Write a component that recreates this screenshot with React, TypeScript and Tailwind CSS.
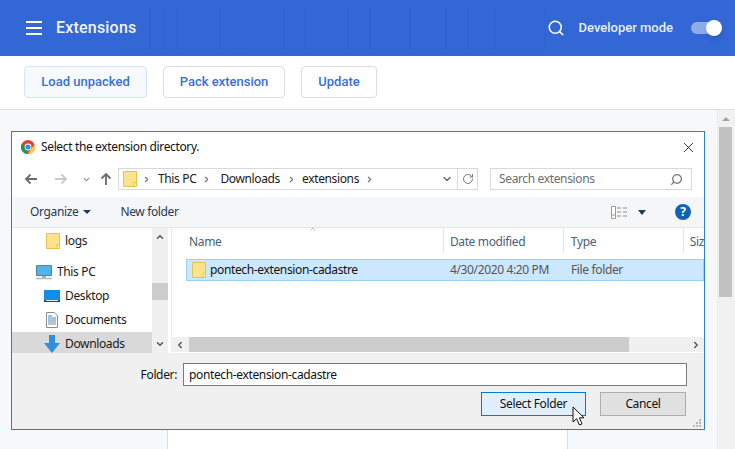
import { ChevronDown, ChevronLeft, ChevronRight, ChevronUp, RotateCw, Search, X } from "lucide-react";

const win = "font-['Noto_Sans',sans-serif] text-[12px] tracking-[-0.36px]";

function Folder({ className = "" }: { className?: string }) {
  return (
    <svg viewBox="0 0 14 16" className={`w-[14px] h-[16px] shrink-0 ${className}`}>
      <path d="M.5.5h13v15H.5z" fill="#fce48f" stroke="#e8c14f" />
      <path d="M11 11.500h2.500v4H11z" fill="#fff3c4" stroke="#e8c14f" />
    </svg>
  );
}

function ChromeLogo() {
  return (
    <svg viewBox="0 0 14 14" className="w-[14px] h-[14px] shrink-0">
      <circle cx="7" cy="7" r="7" fill="#db4437" />
      <path d="M7 14A7 7 0 0 1 1 3.400L4.500 8.500 7 14z" fill="#0f9d58" />
      <path d="M7 14l3-5 3.600-4.500A7 7 0 0 1 7 14z" fill="#ffcd40" />
      <circle cx="7" cy="7" r="3.400" fill="#fff" />
      <circle cx="7" cy="7" r="2.600" fill="#4285f4" />
    </svg>
  );
}

function TreeRow({ icon, label, indent, active }: { icon: React.ReactNode; label: string; indent: string; active?: boolean }) {
  return (
    <div className={`flex items-center h-[24px] shrink-0 ${indent} ${active ? "bg-[#d9d9d9]" : ""}`}>
      {icon}
      <span className="text-[#1a1a1a]">{label}</span>
    </div>
  );
}

function HeaderGhost() {
  const xs = [150, 165, 177, 220, 240, 284, 305, 348, 370, 410, 446, 468, 495, 545];
  return (
    <svg className="absolute left-0 top-0 w-[735px] h-[56px] pointer-events-none" viewBox="0 0 735 56">
      {xs.map((x) => (
        <path key={x} d={`M${x} 6v44`} stroke="#3064d4" strokeWidth="1" />
      ))}
      <path d="M117 53h428" stroke="#3064d4" />
    </svg>
  );
}

function Cursor() {
  return (
    <svg viewBox="0 0 14 20" className="absolute left-[572px] top-[406px] w-[14px] h-[20px]">
      <path d="M1 1v15l3.600-3.400L7.400 19l2.600-1.200-2.700-6H12z" fill="#fff" stroke="#111" strokeWidth="1" strokeLinejoin="round" />
    </svg>
  );
}

function Dialog() {
  return (
    <div className={`absolute left-[11px] top-[131px] w-[694px] h-[299px] bg-white border border-[#2a7fc9] flex flex-col ${win}`}>
      {/* title */}
      <div className="flex items-center h-[29px] shrink-0 pl-[9px] pr-[7px] pt-[1px]">
        <ChromeLogo />
        <span className="ml-[6px] text-[#111]">Select the extension directory.</span>
        <X className="ml-auto w-[17px] h-[17px] text-black" strokeWidth={1.1} />
      </div>

      {/* address bar */}
      <div className="flex items-center h-[22px] shrink-0 mt-[7px] pl-[12px]">
        <svg viewBox="0 0 14 12" className="w-[14px] h-[12px] text-[#6b6b6b]">
          <path d="M13 6H2M6.500 1.500 2 6l4.500 4.500" fill="none" stroke="currentColor" strokeWidth="1.800" />
        </svg>
        <svg viewBox="0 0 14 12" className="w-[14px] h-[12px] ml-[16px] text-[#c8c8c8]">
          <path d="M1 6h11M7.500 1.500 12 6l-4.500 4.500" fill="none" stroke="currentColor" strokeWidth="1.800" />
        </svg>
        <ChevronDown className="w-[9px] h-[9px] ml-[14px] text-[#8a8a8a]" strokeWidth={3} />
        <svg viewBox="0 0 12 14" className="w-[12px] h-[14px] ml-[9px] text-[#6b6b6b]">
          <path d="M6 13V2M1.500 6.500 6 2l4.500 4.500" fill="none" stroke="currentColor" strokeWidth="1.800" />
        </svg>
        <div className="flex items-center w-[360px] h-[22px] ml-[6px] border border-[#d9d9d9] bg-white">
          <Folder className="ml-[4px]" />
          <ChevronRight className="w-[9px] h-[9px] ml-[5px] text-[#707070]" strokeWidth={3} />
          <span className="ml-[7px] text-[#1a1a1a]">This PC</span>
          <ChevronRight className="w-[9px] h-[9px] ml-[6px] text-[#707070]" strokeWidth={3} />
          <span className="ml-[9px] text-[#1a1a1a]">Downloads</span>
          <ChevronRight className="w-[9px] h-[9px] ml-[7px] text-[#707070]" strokeWidth={3} />
          <span className="ml-[6px] text-[#1a1a1a]">extensions</span>
          <ChevronRight className="w-[9px] h-[9px] ml-[6px] text-[#707070]" strokeWidth={3} />
          <ChevronDown className="w-[12px] h-[12px] ml-auto mr-[4px] text-[#606060]" strokeWidth={2.5} />
          <div className="flex items-center justify-center w-[20px] h-full border-l border-[#d9d9d9]">
            <RotateCw className="w-[12px] h-[12px] text-[#6a6a6a]" strokeWidth={1.8} />
          </div>
        </div>
        <div className="flex items-center w-[202px] h-[22px] ml-[12px] border border-[#d9d9d9] pl-[8px] pr-[8px] bg-white">
          <span className="text-[#6d6d6d]">Search extensions</span>
          <Search className="w-[13px] h-[13px] ml-auto text-[#777] -scale-x-100" strokeWidth={2.4} />
        </div>
      </div>

      {/* command bar */}
      <div className="flex items-center h-[30px] shrink-0 mt-[7px] bg-[#f5f6f7] pl-[18px] pr-[13px] text-[#1e395b]">
        <span>Organize</span>
        <span className="ml-[5px] w-0 h-0 border-x-[4px] border-x-transparent border-t-[4px] border-t-[#1e395b]" />
        <span className="ml-[29px]">New folder</span>
        <svg viewBox="0 0 17 13" className="ml-auto w-[17px] h-[13px]">
          <path d="M.5.500h4v12h-4z" fill="#fff" stroke="#9a9a9a" />
          <path d="M1.500 8.500h2v1h-2z" fill="#d33" />
          <path d="M6 2h4M12 2h4M6 6h4M12 6h4M6 10h4M12 10h4" stroke="#8a8a8a" />
        </svg>
        <span className="ml-[10px] w-0 h-0 border-x-[4.500px] border-x-transparent border-t-[5px] border-t-[#1e395b]" />
        <span className="ml-[29px] w-[16px] h-[16px] rounded-full bg-[#0f62b8] text-white text-[12px] font-bold flex items-center justify-center tracking-normal">?</span>
      </div>

      {/* panes */}
      <div className="flex h-[126px] shrink-0 border-t border-[#e5e5e5]">
        <div className="relative w-[140px] shrink-0 flex flex-col overflow-hidden pt-[1px]">
          <TreeRow indent="pl-[34px]" label="logs" icon={<Folder className="mr-[5px]" />} />
          <div className="h-[7px] shrink-0" />
          <TreeRow
            indent="pl-[24px]"
            label="This PC"
            icon={
              <svg viewBox="0 0 16 15" className="w-[16px] h-[15px] mr-[5px]">
                <path d="M.5.500h15v10H.5z" fill="#4db4ef" stroke="#5f7f96" />
                <path d="M6 11h4v2H6z" fill="#9fb2c0" />
                <path d="M0 13.500h16" stroke="#a9bac8" strokeWidth="1.500" />
              </svg>
            }
          />
          <TreeRow
            indent="pl-[32px]"
            label="Desktop"
            icon={
              <svg viewBox="0 0 16 12" className="w-[16px] h-[12px] mr-[5px]">
                <path d="M0 0h16v12H0z" fill="#0f8ef0" />
                <path d="M0 10h16v2H0z" fill="#0a4f8f" />
                <path d="M2 10.500h12" stroke="#d8eefc" />
              </svg>
            }
          />
          <TreeRow
            indent="pl-[34px]"
            label="Documents"
            icon={
              <svg viewBox="0 0 12 16" className="w-[12px] h-[16px] mr-[7px]">
                <path d="M.5.500h8l3 3v12H.5z" fill="#fff" stroke="#8a8a8a" />
                <path d="M2 4h4M2 6h8M2 8h8" stroke="#3f8fd0" />
                <path d="M2 10h8M2 12h8" stroke="#7a8a96" />
              </svg>
            }
          />
          <TreeRow
            indent="pl-[32px]"
            label="Downloads"
            active
            icon={
              <svg viewBox="0 0 16 18" className="w-[16px] h-[18px] mr-[5px]">
                <path d="M5 0h6v8h5l-8 10-8-10h5z" fill="#2f8fe0" />
              </svg>
            }
          />
        </div>
        <div className="w-[16px] shrink-0 bg-[#f0f0f0] flex flex-col items-center py-[4px]">
          <ChevronUp className="w-[10px] h-[10px] text-[#555]" strokeWidth={3.5} />
          <div className="w-full h-[17px] mt-[41px] bg-[#cdcdcd]" />
          <ChevronDown className="w-[10px] h-[10px] mt-auto text-[#555]" strokeWidth={3.5} />
        </div>
        <div className="w-[3px] shrink-0" />
        <div className="flex-1 min-w-0 flex flex-col border-l border-[#ececec]">
          <div className="flex h-[31px] shrink-0 text-[#4c607a]">
            <div className="w-[272px] pl-[17px] pt-[5px] border-r border-[#e5e5e5] relative h-[25px]">
              Name
              <ChevronUp className="absolute left-[136px] -top-[3px] w-[10px] h-[8px] text-[#999]" strokeWidth={2} />
            </div>
            <div className="w-[120px] pl-[6px] pt-[5px] border-r border-[#e5e5e5] h-[25px]">Date modified</div>
            <div className="w-[120px] pl-[7px] pt-[5px] border-r border-[#e5e5e5] h-[25px]">Type</div>
            <div className="pl-[6px] pt-[5px]">Siz</div>
          </div>
          <div className="flex items-center h-[22px] shrink-0 ml-[14px] border border-[#99d1ff] bg-[#cce8ff]">
            <Folder className="ml-[5px]" />
            <span className="ml-[4px] w-[240px] text-[#111]">pontech-extension-cadastre</span>
            <span className="text-[#555] w-[121px]">4/30/2020 4:20 PM</span>
            <span className="text-[#555]">File folder</span>
          </div>
          <div className="flex-1" />
          <div className="flex items-center h-[15px] shrink-0 mb-[1px] bg-[#f0f0f0]">
            <ChevronLeft className="w-[10px] h-[10px] ml-[3px] text-[#555]" strokeWidth={3.500} />
            <div className="w-[440px] h-full ml-[4px] bg-[#cdcdcd]" />
            <ChevronRight className="w-[10px] h-[10px] ml-auto mr-[3px] text-[#555]" strokeWidth={3.500} />
          </div>
        </div>
      </div>

      {/* footer */}
      <div className="relative flex-1 bg-[#f0f0f0] flex flex-col pt-[10px] pr-[17px]">
        <div className="flex items-center justify-end h-[23px]">
          <span className="text-[#111] mr-[6px]">Folder:</span>
          <div className="flex items-center w-[504px] h-[23px] border border-[#7a7a7a] bg-white pl-[5px] text-[#111]">pontech-extension-cadastre</div>
        </div>
        <div className="flex justify-end mt-[6px] mr-[1px]">
          <div className="flex items-center justify-center w-[105px] h-[24px] border border-[#0078d7] bg-[#e1effa] text-[#111]">Select Folder</div>
          <div className="flex items-center justify-center w-[86px] h-[24px] ml-[14px] border border-[#adadad] bg-[#e1e1e1] text-[#111]">Cancel</div>
        </div>
        <svg viewBox="0 0 8 8" className="absolute right-[3px] bottom-[2px] w-[8px] h-[8px]">
          <path d="M6 0h2v2H6zM3 3h2v2H3zM6 3h2v2H6zM0 6h2v2H0zM3 6h2v2H3zM6 6h2v2H6z" fill="#b8b8b8" />
        </svg>
      </div>
    </div>
  );
}

export default function App() {
  return (
    <div className="relative w-[735px] h-[449px] overflow-hidden bg-[#f7f8fa] flex flex-col font-['Roboto',sans-serif]">
      <header className="relative flex items-center h-[56px] shrink-0 bg-[#3367d6] text-white">
        <HeaderGhost />
        <div className="relative flex flex-col gap-[4px] ml-[26px]">
          <span className="w-[16px] h-[2px] bg-white" />
          <span className="w-[16px] h-[2px] bg-white" />
          <span className="w-[16px] h-[2px] bg-white" />
        </div>
        <h1 className="relative ml-[14px] text-[16px] font-medium tracking-[0.2px] text-[#f1f4fc]">Extensions</h1>
        <Search className="relative ml-auto w-[18px] h-[18px]" strokeWidth={2} />
        <span className="relative ml-[14px] text-[13px] font-medium text-[#e8eefb]">Developer mode</span>
        <div className="relative w-[30px] h-[12px] ml-[18px] mr-[14px] rounded-full bg-[#8fabe8]">
          <span className="absolute -right-[1px] -top-[2px] w-[16px] h-[16px] rounded-full bg-white shadow-md" />
        </div>
      </header>

      <div className="flex items-center gap-[16px] h-[54px] shrink-0 bg-white border-b border-[#e0e0e0] pl-[24px] pb-[1px] text-[13px] font-medium text-[#3a6fd8]">
        <div className="flex items-center justify-center w-[123px] h-[32px] rounded border border-[#d2e3fc] bg-[#f6faff]">Load unpacked</div>
        <div className="flex items-center justify-center w-[122px] h-[32px] rounded border border-[#dadce0]">Pack extension</div>
        <div className="flex items-center justify-center w-[76px] h-[32px] rounded border border-[#dadce0]">Update</div>
      </div>

      <div className="flex flex-1 min-h-0">
        <div className="flex-1 pl-[167px]">
          <div className="w-[401px] h-full mt-[40px] bg-white border-x border-[#dddddd]" />
        </div>
        <div className="w-[18px] shrink-0 bg-[#f1f1f1] border-l border-[#ededed] flex flex-col items-start pt-[7px]">
          <span className="ml-[4px] w-0 h-0 border-x-[4px] border-x-transparent border-b-[4px] border-b-[#a3a3a3]" />
          <div className="ml-[1px] w-[13px] h-[170px] mt-[6px] bg-[#c1c1c1]" />
        </div>
      </div>

      <Dialog />
      <Cursor />
    </div>
  );
}
